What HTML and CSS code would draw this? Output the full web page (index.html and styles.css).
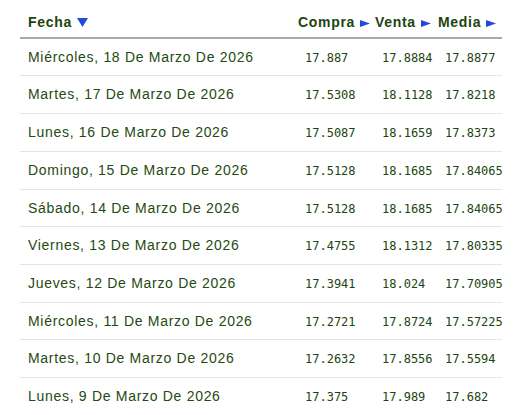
FILE: index.html
```html
<!DOCTYPE html>
<html lang="es">
<head>
<meta charset="utf-8">
<title>Tipo de cambio</title>
<link rel="stylesheet" href="styles.css">
</head>
<body>
<div class="wrap">
<table class="rates">
  <colgroup>
    <col class="c-date">
    <col class="c-buy">
    <col class="c-sell">
    <col class="c-mid">
  </colgroup>
  <thead>
    <tr>
      <th>Fecha<svg class="tri-down" width="11" height="9" viewBox="0 0 11 9"><path d="M0 0H11L5.5 9Z"/></svg></th>
      <th>Compra<svg class="tri-right" width="10" height="7" viewBox="0 0 10 7"><path d="M0 0L10 3.5L0 7Z"/></svg></th>
      <th>Venta<svg class="tri-right" width="10" height="7" viewBox="0 0 10 7"><path d="M0 0L10 3.5L0 7Z"/></svg></th>
      <th>Media<svg class="tri-right" width="10" height="7" viewBox="0 0 10 7"><path d="M0 0L10 3.5L0 7Z"/></svg></th>
    </tr>
  </thead>
  <tbody>
    <tr><td>Miércoles, 18 De Marzo De 2026</td><td class="num">17.887</td><td class="num">17.8884</td><td class="num">17.8877</td></tr>
    <tr><td>Martes, 17 De Marzo De 2026</td><td class="num">17.5308</td><td class="num">18.1128</td><td class="num">17.8218</td></tr>
    <tr><td>Lunes, 16 De Marzo De 2026</td><td class="num">17.5087</td><td class="num">18.1659</td><td class="num">17.8373</td></tr>
    <tr><td>Domingo, 15 De Marzo De 2026</td><td class="num">17.5128</td><td class="num">18.1685</td><td class="num">17.84065</td></tr>
    <tr><td>Sábado, 14 De Marzo De 2026</td><td class="num">17.5128</td><td class="num">18.1685</td><td class="num">17.84065</td></tr>
    <tr><td>Viernes, 13 De Marzo De 2026</td><td class="num">17.4755</td><td class="num">18.1312</td><td class="num">17.80335</td></tr>
    <tr><td>Jueves, 12 De Marzo De 2026</td><td class="num">17.3941</td><td class="num">18.024</td><td class="num">17.70905</td></tr>
    <tr><td>Miércoles, 11 De Marzo De 2026</td><td class="num">17.2721</td><td class="num">17.8724</td><td class="num">17.57225</td></tr>
    <tr><td>Martes, 10 De Marzo De 2026</td><td class="num">17.2632</td><td class="num">17.8556</td><td class="num">17.5594</td></tr>
    <tr><td>Lunes, 9 De Marzo De 2026</td><td class="num">17.375</td><td class="num">17.989</td><td class="num">17.682</td></tr>
  </tbody>
</table>
</div>
</body>
</html>
```
FILE: styles.css
```css
html, body {
  margin: 0;
  padding: 0;
  background: #ffffff;
}

.wrap {
  padding: 8px 20px 0 20px;
}

.rates {
  width: 482px;
  table-layout: fixed;
  border-collapse: collapse;
  font-family: "Liberation Sans", Arial, sans-serif;
  font-size: 14px;
  line-height: 16.7px;
  color: #1f4a10;
  letter-spacing: 0.7px;
}

.c-date { width: 270px; }
.c-buy { width: 77px; }
.c-sell { width: 63px; }
.c-mid { width: 72px; }

.rates th {
  text-align: left;
  font-weight: bold;
  color: #1c4510;
  padding: 6px 0 6px 8px;
  white-space: nowrap;
  border-bottom: 2px solid #a9a9a9;
}

.rates td {
  padding: 10px 0 10px 8px;
  border-bottom: 1px solid #e4e4e4;
  white-space: nowrap;
  vertical-align: baseline;
}

.rates td.num {
  font-family: "DejaVu Sans Mono", "Liberation Mono", monospace;
  font-size: 12px;
  line-height: 12px;
  letter-spacing: 0;
  padding-left: 15px;
  color: #1c4510;
}

.tri-down,
.tri-right {
  fill: #2447e0;
  vertical-align: baseline;
}

.tri-down {
  margin-left: 5px;
}

.tri-right {
  margin-left: 5px;
}
```
